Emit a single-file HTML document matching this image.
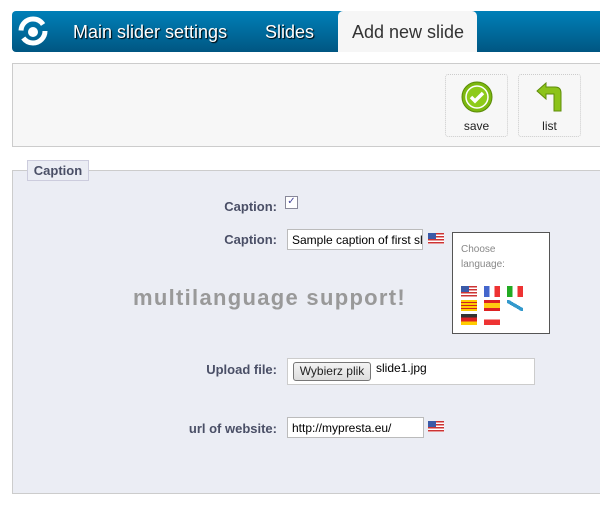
<!DOCTYPE html>
<html><head><style>
body{margin:0;width:600px;height:508px;background:#fff;font-family:"Liberation Sans",Arial,sans-serif;position:relative;overflow:hidden}
.a{position:absolute}
.nav{left:12px;top:11px;width:600px;height:41px;background:linear-gradient(#0080b8,#005682);border-radius:4px 0 0 4px}
.nav span{position:absolute;top:11px;color:#fff;font-size:18px;text-shadow:1px 1px 1px #000}
.tab{left:338px;top:11px;width:139px;height:41px;background:#f6f6f6;border-radius:5px 5px 0 0;color:#333;font-size:18px}
.tb{left:12px;top:63px;width:600px;height:84px;background:#f7f7f7;border:1px solid #ccc;box-sizing:border-box}
.btn{top:74px;width:63px;height:63px;border:1px dotted #ccc;border-radius:3px;box-sizing:border-box;background:#f7f7f7;font-size:12px;color:#222;text-align:center}
.fs{left:12px;top:170px;width:600px;height:324px;background:#ebedf4;border:1px solid #ccc;box-sizing:border-box}
.lg{left:27px;top:160px;width:62px;height:21px;background:#ebedf4;border:1px solid #ccd;box-sizing:border-box;font-size:13px;font-weight:bold;color:#4a4f66;text-align:center;line-height:20px}
.lb{font-size:13px;font-weight:bold;color:#4a4f66;text-align:right;width:200px;left:77px}
.in{background:#fff;border:1px solid #bbb;box-sizing:border-box;font-size:12px;color:#000;padding:3px 4px;white-space:nowrap;overflow:hidden}
.flag{width:16px;height:11px;background:repeating-linear-gradient(#c33 0 1.5px,#fff 1.5px 3px);position:absolute}
.flag:before{content:"";position:absolute;left:0;top:0;width:8px;height:6px;background:#3b5aa8}
</style></head><body>
<div class="a nav">
<svg class="a" style="left:5px;top:4px" width="32" height="32" viewBox="0 0 32 32"><circle cx="16" cy="16" r="12" fill="none" stroke="#fff" stroke-width="5" stroke-dasharray="30 8"/><circle cx="16" cy="17" r="5" fill="#fff"/></svg>
<span style="left:61px">Main slider settings</span>
<span style="left:253px">Slides</span>
</div>
<div class="a tab"><span class="a" style="left:14px;top:11px">Add new slide</span></div>
<div class="a tb"></div>
<div class="a btn" style="left:445px">
<svg style="margin-top:6px" width="32" height="32" viewBox="0 0 32 32"><circle cx="16" cy="16" r="15" fill="#7cb80f" stroke="#5a8a08"/><circle cx="16" cy="16" r="11" fill="#8ecb1a" stroke="#fff" stroke-width="1.5"/><path d="M10 16l4 4 8-8" fill="none" stroke="#fff" stroke-width="3.5"/></svg><div style="margin-top:3px">save</div></div>
<div class="a btn" style="left:518px">
<svg style="margin-top:6px" width="32" height="32" viewBox="0 0 32 32"><path d="M12 2L3 10l9 8v-5h8v17h7V12q0-6-6-6h-9z" fill="#8cc31a" stroke="#5f8c0a"/></svg><div style="margin-top:3px">list</div></div>
<div class="a fs"></div>
<div class="a lg">Caption</div>
<div class="a lb" style="top:199px">Caption:</div>
<div class="a" style="left:285px;top:196px;width:11px;height:11px;border:1px solid #889;background:#fff;font-size:10px;line-height:10px;color:#449;text-align:center">✓</div>
<div class="a lb" style="top:232px">Caption:</div>
<div class="a in" style="left:287px;top:229px;width:136px;height:21px">Sample caption of first slide</div>
<div class="flag" style="left:428px;top:233px"></div>
<div class="a" style="left:452px;top:232px;width:98px;height:102px;background:#fff;border:1px solid #555;box-sizing:border-box;font-size:10px;color:#888;padding:9px 0 0 8px;line-height:15px">Choose<br>language:</div>
<div class="flag" style="left:461px;top:286px"></div>
<div class="a" style="left:484px;top:286px;width:16px;height:11px;background:linear-gradient(90deg,#46c 0 33%,#fff 33% 66%,#e33 66%)"></div>
<div class="a" style="left:507px;top:286px;width:16px;height:11px;background:linear-gradient(90deg,#2a2 0 33%,#fff 33% 66%,#e33 66%)"></div>
<div class="a" style="left:461px;top:300px;width:16px;height:11px;background:repeating-linear-gradient(#fc0 0 2px,#c22 2px 3px)"></div>
<div class="a" style="left:484px;top:300px;width:16px;height:11px;background:linear-gradient(#d22 0 28%,#fc1 28% 72%,#d22 72%)"></div>
<div class="a" style="left:507px;top:300px;width:16px;height:11px;background:linear-gradient(30deg,transparent 40%,#39c 40% 60%,transparent 60%)"></div>
<div class="a" style="left:461px;top:314px;width:16px;height:11px;background:linear-gradient(#333 0 33%,#d22 33% 66%,#fc0 66%)"></div>
<div class="a" style="left:484px;top:314px;width:16px;height:11px;background:linear-gradient(#fff 0 50%,#e33 50%)"></div>
<div class="a" style="left:133px;top:285px;font-size:22px;letter-spacing:1.3px;font-weight:bold;color:#999;white-space:nowrap">multilanguage support!</div>
<div class="a lb" style="top:362px">Upload file:</div>
<div class="a" style="left:287px;top:358px;width:248px;height:27px;background:#fff;border:1px solid #ccc;box-sizing:border-box"></div>
<div class="a" style="left:293px;top:362px;width:78px;height:19px;background:linear-gradient(#f4f4f4,#ddd);border:1px solid #777;border-radius:3px;box-sizing:border-box;font-size:12px;text-align:center;line-height:17px;color:#222">Wybierz plik</div>
<div class="a" style="left:376px;top:361px;font-size:12px">slide1.jpg</div>
<div class="a lb" style="top:421px">url of website:</div>
<div class="a in" style="left:287px;top:417px;width:137px;height:21px">http://mypresta.eu/</div>
<div class="flag" style="left:428px;top:421px"></div>
</body></html>
